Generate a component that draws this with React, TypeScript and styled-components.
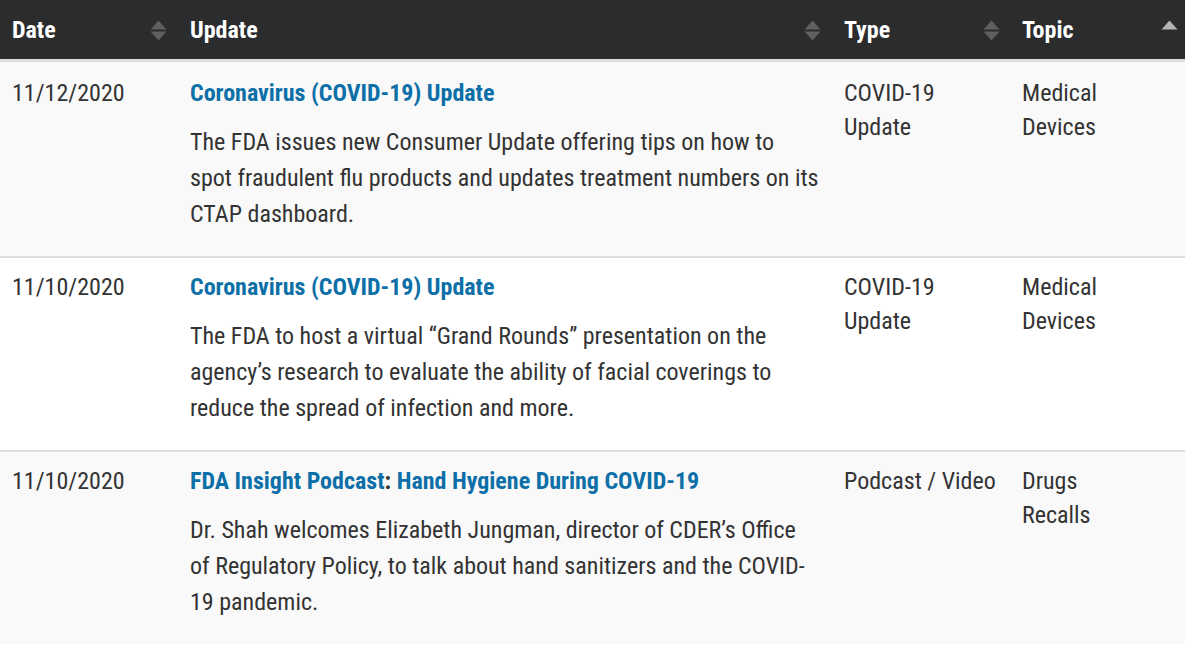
import React from 'react';
import styled, { createGlobalStyle } from 'styled-components';

const GlobalStyle = createGlobalStyle`
  html, body {
    margin: 0;
    padding: 0;
    background: #ffffff;
  }
  body {
    font-family: "Roboto Condensed", Roboto, "Liberation Sans", sans-serif;
    font-stretch: condensed;
    color: #333333;
  }
`;

type SortState = 'none' | 'asc';

interface Column {
  label: string;
  width: number;
  sort: SortState;
  iconInset: number;
}

const columns: Column[] = [
  { label: 'Date', width: 178, sort: 'none', iconInset: 11 },
  { label: 'Update', width: 654, sort: 'none', iconInset: 11 },
  { label: 'Type', width: 178, sort: 'none', iconInset: 10 },
  { label: 'Topic', width: 175, sort: 'asc', iconInset: 7 },
];

interface Entry {
  date: string;
  title: string[];
  summary: string;
  type: string;
  topics: string[];
}

const entries: Entry[] = [
  {
    date: '11/12/2020',
    title: ['Coronavirus (COVID-19) Update'],
    summary:
      'The FDA issues new Consumer Update offering tips on how to spot fraudulent flu products and updates treatment numbers on its CTAP dashboard.',
    type: 'COVID-19 Update',
    topics: ['Medical Devices'],
  },
  {
    date: '11/10/2020',
    title: ['Coronavirus (COVID-19) Update'],
    summary:
      'The FDA to host a virtual \u201cGrand Rounds\u201d presentation on the agency\u2019s research to evaluate the ability of facial coverings to reduce the spread of infection and more.',
    type: 'COVID-19 Update',
    topics: ['Medical Devices'],
  },
  {
    date: '11/10/2020',
    title: ['FDA Insight Podcast', 'Hand Hygiene During COVID-19'],
    summary:
      'Dr. Shah welcomes Elizabeth Jungman, director of CDER\u2019s Office of Regulatory Policy, to talk about hand sanitizers and the COVID-19 pandemic.',
    type: 'Podcast / Video',
    topics: ['Drugs', 'Recalls'],
  },
];

// up/down carets; the active (ascending) column only shows a light up caret
function SortIcon({ state }: { state: SortState }) {
  return (
    <svg width="17" height="21" viewBox="0 0 17 21">
      {state === 'asc' ? (
        <polygon points="8.5,0.5 16.5,9.5 0.5,9.5" fill="#b3b3b3" />
      ) : (
        <>
          <polygon points="8.5,0.5 16.5,9.5 0.5,9.5" fill="#5f5f5f" />
          <polygon points="0.5,11.5 16.5,11.5 8.5,20.5" fill="#5f5f5f" />
        </>
      )}
    </svg>
  );
}

export default function App() {
  return (
    <>
      <GlobalStyle />
      <Table>
        <colgroup>
          {columns.map(c => (
            <col key={c.label} style={{ width: c.width }} />
          ))}
        </colgroup>
        <thead>
          <tr>
            {columns.map(c => (
              <HeadCell key={c.label} $inset={c.iconInset}>
                <HeadInner>
                  <span>{c.label}</span>
                  <IconSlot>
                    <SortIcon state={c.sort} />
                  </IconSlot>
                </HeadInner>
              </HeadCell>
            ))}
          </tr>
        </thead>
        <tbody>
          {entries.map((e, i) => (
            <Row key={i} $striped={i % 2 === 0}>
              <Cell>{e.date}</Cell>
              <Cell>
                <Title>
                  {e.title.map((t, j) => (
                    <React.Fragment key={j}>
                      {j > 0 && ': '}
                      <TitleLink href="#">{t}</TitleLink>
                    </React.Fragment>
                  ))}
                </Title>
                <Summary>{e.summary}</Summary>
              </Cell>
              <Cell>{e.type}</Cell>
              <Cell>
                {e.topics.map(t => (
                  <div key={t}>{t}</div>
                ))}
              </Cell>
            </Row>
          ))}
        </tbody>
      </Table>
    </>
  );
}

const Table = styled.table`
  width: 100%;
  table-layout: fixed;
  border-collapse: collapse;
  border-spacing: 0;
`;

const HeadCell = styled.th<{ $inset: number }>`
  height: 58px;
  padding: 1px ${p => p.$inset}px 0 12px;
  background: #2b2c2e;
  color: #ffffff;
  font-size: 24px;
  font-weight: 700;
  line-height: 28px;
  text-align: left;
  vertical-align: middle;
  border-bottom: 3px solid #dcdcdc;
`;

const HeadInner = styled.div`
  display: flex;
  align-items: center;
  justify-content: space-between;
`;

const IconSlot = styled.span`
  display: flex;
`;

const Row = styled.tr<{ $striped: boolean }>`
  background: ${p => (p.$striped ? '#f9f9f9' : '#ffffff')};
  border-bottom: 2px solid #dddddd;

  &:first-child td {
    padding-top: 14px;
  }

  &:last-child {
    border-bottom: none;
  }
`;

const Cell = styled.td`
  padding: 12px 12px 24px;
  vertical-align: top;
  font-size: 24px;
  line-height: 34px;
  color: #333333;
`;

const Title = styled.div`
  font-weight: 700;
  color: #333333;
`;

const TitleLink = styled.a`
  color: #0c6fa7;
  text-decoration: none;
`;

const Summary = styled.p`
  margin: 14px 0 0;
  line-height: 36px;
`;
